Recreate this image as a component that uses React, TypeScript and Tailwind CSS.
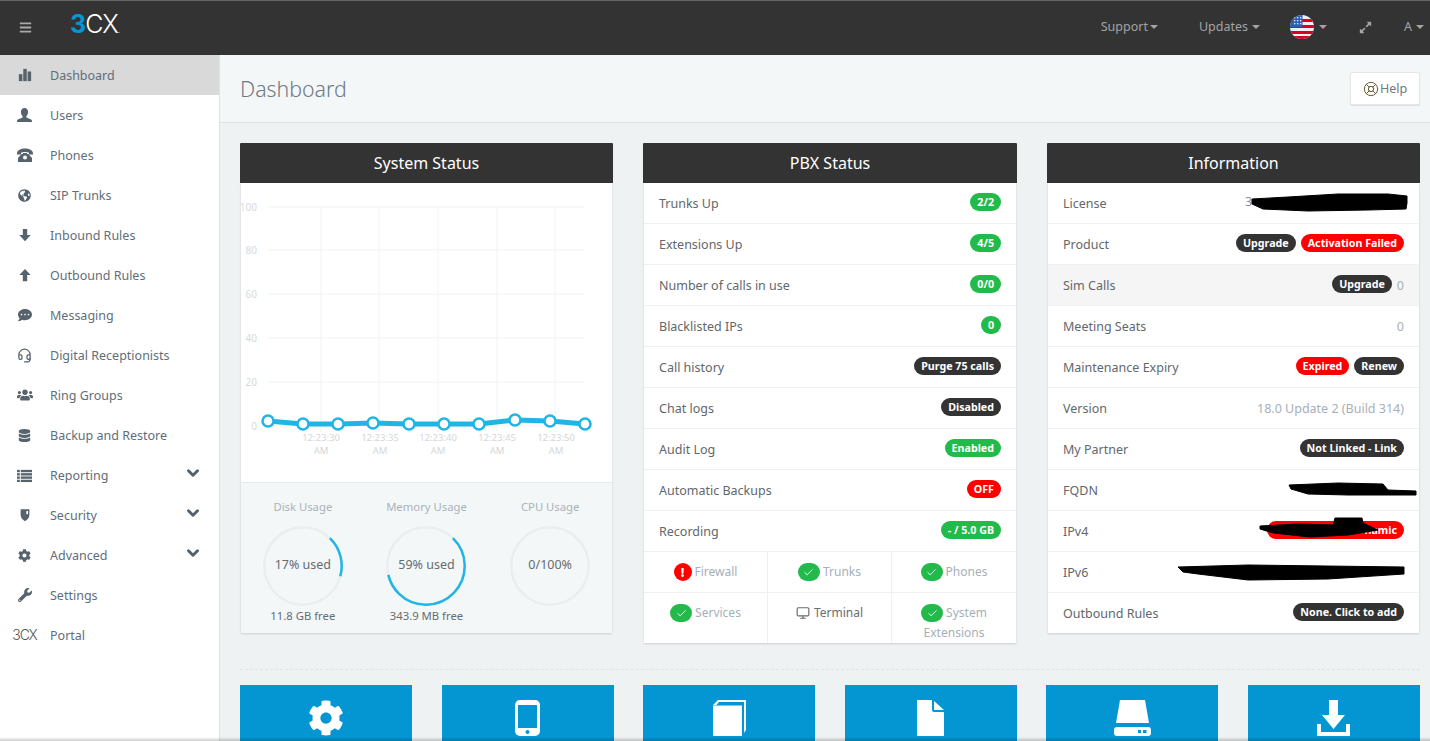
import type { ReactNode } from "react"
import {
  FaBars,
  FaGlobeAmericas,
  FaCommentDots,
  FaUsers,
  FaDatabase,
  FaCog,
  FaWrench,
  FaExpandAlt,
  FaExclamation,
} from "react-icons/fa"
import { FiMonitor } from "react-icons/fi"
import { Check as CheckMark, ChevronDown, Headset, LifeBuoy } from "lucide-react"

const FONT = { fontFamily: '"Noto Sans", sans-serif' }

function Glyph({ children, w = 14 }: { children: ReactNode; w?: number }) {
  return (
    <svg viewBox="0 0 16 16" width={w} height={w} fill="currentColor">
      {children}
    </svg>
  )
}

const BarsIcon = () => (
  <Glyph>
    <rect x="1" y="7" width="4" height="8" />
    <rect x="6" y="1" width="4" height="14" />
    <rect x="11" y="4" width="4" height="11" />
  </Glyph>
)

const UserIcon = () => (
  <Glyph w={15}>
    <path d="M8 0c2.400 0 3.800 1.800 3.800 4.200 0 1.900-.8 3.500-1.800 4.400V10l4.500 2c.9.4 1.500 1.200 1.500 2.200V15H0v-.8c0-1 .6-1.800 1.500-2.200L6 10V8.600C5 7.700 4.200 6.100 4.200 4.200 4.200 1.800 5.600 0 8 0z" />
  </Glyph>
)

const PhoneIcon = () => (
  <Glyph w={16}>
    <path d="M0 6.500C0 3 4 1.500 8 1.500s8 1.500 8 5v1h-4V5.700C11 5.100 9.500 4.900 8 4.900s-3 .2-4 .8v1.800H0z" />
    <path d="M4.500 7h1.500V6h4v1h1.500L15 11v4H1v-4z" />
    <circle cx="8" cy="10.500" r="2" fill="#fff" />
  </Glyph>
)

const ArrowDownIcon = () => (
  <Glyph>
    <path d="M5.500 1h5v7h4L8 15 1.500 8h4z" />
  </Glyph>
)

const ArrowUpIcon = () => (
  <Glyph>
    <path d="M8 1l6.500 7h-4v7h-5V8h-4z" />
  </Glyph>
)

const ListIcon = () => (
  <Glyph w={15}>
    <rect x="0" y="2" width="3" height="2.500" />
    <rect x="4" y="2" width="12" height="2.500" />
    <rect x="0" y="5.500" width="3" height="2.500" />
    <rect x="4" y="5.500" width="12" height="2.500" />
    <rect x="0" y="9" width="3" height="2.500" />
    <rect x="4" y="9" width="12" height="2.500" />
    <rect x="0" y="12.500" width="3" height="2.500" />
    <rect x="4" y="12.500" width="12" height="2.500" />
  </Glyph>
)

const ShieldIcon = () => (
  <Glyph>
    <path d="M3 1.500h10V8c0 3.500-2.500 5.500-5 7-2.500-1.500-5-3.500-5-7z" />
    <path d="M9.500 3.500h2V7H9.500z" fill="#fff" />
  </Glyph>
)

function Logo({ small }: { small?: boolean }) {
  return (
    <span
      className={small ? "text-[14px] font-light tracking-[-1.2px] text-[#555]" : "text-[25px] font-light tracking-[-1px] text-white"}
      style={{ fontFamily: "Inter, sans-serif", lineHeight: 1 }}
    >
      <span className={small ? "" : "font-bold text-[#0396d2]"}>3</span>CX
      {!small && <span className="text-[8px]">.</span>}
    </span>
  )
}

const NAV: { label: string; icon: ReactNode; chevron?: boolean }[] = [
  { label: "Dashboard", icon: <BarsIcon /> },
  { label: "Users", icon: <UserIcon /> },
  { label: "Phones", icon: <PhoneIcon /> },
  { label: "SIP Trunks", icon: <FaGlobeAmericas className="text-[13px]" /> },
  { label: "Inbound Rules", icon: <ArrowDownIcon /> },
  { label: "Outbound Rules", icon: <ArrowUpIcon /> },
  { label: "Messaging", icon: <FaCommentDots /> },
  { label: "Digital Receptionists", icon: <Headset size={15} strokeWidth={2} /> },
  { label: "Ring Groups", icon: <FaUsers className="text-[16px]" /> },
  { label: "Backup and Restore", icon: <FaDatabase className="text-[13px]" /> },
  { label: "Reporting", icon: <ListIcon />, chevron: true },
  { label: "Security", icon: <ShieldIcon />, chevron: true },
  { label: "Advanced", icon: <FaCog className="text-[13px]" />, chevron: true },
  { label: "Settings", icon: <FaWrench /> },
  { label: "Portal", icon: <Logo small /> },
]

function Caret({ className = "" }: { className?: string }) {
  return <span className={`inline-block h-0 w-0 border-x-[4px] border-t-[4px] border-x-transparent border-t-current ${className}`} />
}

function Badge({ children, tone = "dark" }: { children: ReactNode; tone?: "dark" | "red" | "green" }) {
  const bg = tone === "red" ? "bg-[#ff0000]" : tone === "green" ? "bg-[#22bb4b]" : "bg-[#333333]"
  return (
    <span className={`inline-flex h-[18px] items-center rounded-full px-[7px] text-[10.7px] font-bold text-white ${bg}`}>
      {children}
    </span>
  )
}

function Row({ label, children, gray, last }: { label: string; children?: ReactNode; gray?: boolean; last?: boolean }) {
  return (
    <div className={`flex items-center justify-between px-[15px] ${last ? "h-[40px]" : "h-[41px] border-b border-[#eef1f2]"} ${gray ? "bg-[#f5f5f5]" : ""}`}>
      <span className="pt-[2px] text-[12.5px] text-[#62676b]">{label}</span>
      <div className="mb-[2px] flex items-center gap-[5px] text-[12.5px] text-[#a5b0b8]">{children}</div>
    </div>
  )
}

function Plain({ children }: { children: ReactNode }) {
  return <span className="pt-[4px]">{children}</span>
}

function Panel({ title, wide, children }: { title: string; wide?: boolean; children: ReactNode }) {
  return (
    <section className={wide ? "w-[374px]" : "w-[373px]"}>
      <h2 className="flex h-10 items-center justify-center rounded-t-[1px] bg-[#333333] text-[16px] text-white">{title}</h2>
      <div className="mx-px shadow-[0_1px_2px_rgba(0,0,0,0.15)]">{children}</div>
    </section>
  )
}

function Chart() {
  const xs = [268, 303, 338, 373, 409, 444, 479, 515, 550, 585].map((x) => x - 241)
  const ys = [421, 424, 424, 423, 424, 424, 424, 420, 421, 424].map((y) => y - 183)
  const grid = [207, 250, 294, 338, 382, 426].map((y) => y - 183)
  const vert = [321, 379, 438, 497, 555].map((x) => x - 241)
  const labels = [
    { x: 321, t: "12:23:30" },
    { x: 380, t: "12:23:35" },
    { x: 438, t: "12:23:40" },
    { x: 497, t: "12:23:45" },
    { x: 556, t: "12:23:50" },
  ]
  const points = xs.map((x, i) => `${x},${ys[i]}`).join(" ")
  return (
    <svg viewBox="0 0 371 299" className="block h-[299px] w-[371px] bg-white">
      {grid.map((y) => (
        <line key={y} x1="27" x2="344" y1={y} y2={y} stroke="#f1f3f4" />
      ))}
      {vert.map((x) => (
        <line key={x} x1={x} x2={x} y1="24" y2="249" stroke="#f1f3f4" />
      ))}
      {[100, 80, 60, 40, 20, 0].map((v, i) => (
        <text key={v} x="16" y={grid[i] + 4} textAnchor="end" fontSize="10" fill="#d6dadc" style={FONT}>
          {v}
        </text>
      ))}
      {labels.map((l) => (
        <text key={l.t} textAnchor="middle" fontSize="9.5" fill="#d3d7da" style={FONT}>
          <tspan x={l.x - 241} y="258">{l.t}</tspan>
          <tspan x={l.x - 241} y="271">AM</tspan>
        </text>
      ))}
      <polyline points={points} fill="none" stroke="#1fb5e5" strokeWidth="5" />
      {xs.map((x, i) => (
        <circle key={x} cx={x} cy={ys[i]} r="5.5" fill="#fff" stroke="#1fb5e5" strokeWidth="2.5" />
      ))}
    </svg>
  )
}

function Gauge({ title, value, free, pct }: { title: string; value: string; free?: string; pct: number }) {
  const r = 38.7
  const c = 2 * Math.PI * r
  return (
    <div className="flex flex-col items-center">
      <div className="text-[11.3px] leading-[17px] text-[#a9b3ba]">{title}</div>
      <div className="relative mt-[11px] h-[80px] w-[80px]">
        <svg viewBox="0 0 80 80" className="h-[80px] w-[80px]">
          <circle cx="40" cy="40" r={r} fill="none" stroke="#e9eff0" strokeWidth="2.5" />
          {pct > 0 && (
            <circle
              cx="40"
              cy="40"
              r={r}
              fill="none"
              stroke="#1fb5e5"
              strokeWidth="2.5"
              strokeDasharray={`${(pct / 100) * c} ${c}`}
              transform="rotate(-46 40 40)"
            />
          )}
        </svg>
        <div className="absolute inset-0 flex items-center justify-center pb-[2px] text-[12.5px] text-[#666c70]">{value}</div>
      </div>
      <div className="mt-[1px] h-[18px] text-[11.3px] leading-[18px] text-[#666c70]">{free}</div>
    </div>
  )
}

function Check({ red }: { red?: boolean }) {
  return (
    <span
      className={`inline-flex h-[18px] items-center justify-center rounded-full text-white ${red ? "w-[18px] bg-[#ff0000] text-[9px]" : "w-[22px] bg-[#22bb4b]"}`}
    >
      {red ? <FaExclamation /> : <CheckMark size={11} strokeWidth={2} />}
    </span>
  )
}

function StatusCell({ label, red, second }: { label: string; red?: boolean; second?: string }) {
  return (
    <div className="flex h-full w-[124px] flex-col items-center pt-[10px] text-[12px] leading-[20px] text-[#a5b0b8]">
      <div className="flex items-center gap-[3px]">
        <Check red={red} />
        <span>{label}</span>
      </div>
      {second && <div>{second}</div>}
    </div>
  )
}

// marker strokes drawn over the redacted values
function Scribble({ d }: { d: string }) {
  return (
    <svg viewBox="0 0 371 41" className="pointer-events-none absolute inset-0 h-[41px] w-[371px]">
      <path d={d} fill="#000" stroke="#000" strokeLinejoin="round" />
    </svg>
  )
}

const GearTile = () => <FaCog className="text-[36px]" />

const PhoneTile = () => (
  <svg viewBox="0 0 25 36" width="25" height="36" fill="#fff">
    <rect width="25" height="36" rx="5" />
    <rect x="3" y="5" width="19" height="23" fill="#0396d2" />
    <circle cx="12.5" cy="32" r="2" fill="#0396d2" />
  </svg>
)

const BookTile = () => (
  <svg viewBox="0 0 33 36" width="33" height="36" fill="#fff">
    <path d="M5 0H33V30L31 33V2H6L3.500 5H0z" />
    <path d="M0 5.500H29V36H0z" />
  </svg>
)

const FileTile = () => (
  <svg viewBox="0 0 27 36" width="27" height="36" fill="#fff">
    <path d="M0 0H15V10a2 2 0 0 0 2 2H27V36H0z" />
    <path d="M17 1L27 10H17z" />
  </svg>
)

const DriveTile = () => (
  <svg viewBox="0 0 37 36" width="37" height="36" fill="#fff">
    <path d="M6 0H31L35 23H2z" />
    <rect y="27" width="37" height="9" rx="3" />
    <rect x="24" y="30" width="3" height="3" fill="#0396d2" />
    <rect x="29" y="30" width="3.500" height="3" fill="#0396d2" />
  </svg>
)

const DownloadTile = () => (
  <svg viewBox="0 0 33 36" width="33" height="36" fill="#fff">
    <path d="M12 0H21V15H28L16.500 29L5 15H12z" />
    <path d="M0 24H4V32H29V24H33V36H0z" />
  </svg>
)

const TILES = [GearTile, PhoneTile, BookTile, FileTile, DriveTile, DownloadTile]

function Flag() {
  return (
    <svg viewBox="0 0 24 24" className="ml-[30px] h-6 w-6">
      <clipPath id="flag"><circle cx="12" cy="12" r="12" /></clipPath>
      <g clipPath="url(#flag)">
        <rect width="24" height="24" fill="#f0f0f0" />
        <rect y="4" width="24" height="3" fill="#d80027" />
        <rect y="10" width="24" height="3" fill="#d80027" />
        <rect y="16" width="24" height="3" fill="#d80027" />
        <rect y="21" width="24" height="3" fill="#d80027" />
        <rect width="12.5" height="12" fill="#2d5fb5" />
        {[4, 7, 10].flatMap((x) =>
          [2, 5, 8].map((y) => <rect key={`${x}-${y}`} x={x} y={y} width="1.300" height="1.300" fill="#f0f0f0" />),
        )}
      </g>
    </svg>
  )
}

export default function App() {
  return (
    <div className="relative flex h-[741px] w-[1430px] flex-col overflow-hidden bg-[#eef2f3]" style={FONT}>
      <header className="flex h-[55px] shrink-0 items-center border-t border-[#666] bg-[#333333] pb-[2px] text-[#a3a3a3]">
        <FaBars className="ml-[19px] text-[13px] text-[#aaa]" />
        <div className="ml-[38px] mt-[-3px]">
          <Logo />
        </div>
        <div className="ml-auto flex items-center text-[12.5px]">
          <span className="flex items-center gap-[2px]">Support<Caret /></span>
          <span className="ml-[41px] flex items-center gap-1">Updates<Caret /></span>
          <Flag />
          <Caret className="ml-[5px]" />
          <FaExpandAlt className="ml-[32px] text-[13px]" />
          <span className="ml-[32px] mr-[6px] flex items-center gap-[4px]">A<Caret /></span>
        </div>
      </header>

      <div className="flex min-h-0 flex-1">
        <aside className="w-[220px] shrink-0 border-r border-[#dfe3e5] bg-white">
          {NAV.map((item, i) => (
            <div key={item.label} className={`flex h-10 items-center pr-[17px] text-[12.5px] text-[#5f6e7a] ${i === 0 ? "bg-[#d9d9d9]" : ""}`}>
              <span className="flex w-[50px] shrink-0 justify-center pr-[1px] text-[14px] text-[#56636d]">{item.icon}</span>
              <span className="pt-[2px]">{item.label}</span>
              {item.chevron && <ChevronDown size={18} strokeWidth={4} className="mb-[5px] ml-auto text-[#56636d]" />}
            </div>
          ))}
        </aside>

        <main className="min-w-0 flex-1">
          <div className="flex h-[68px] items-center justify-between border-b border-[#dfe3e5] bg-[#f4f7f8] pl-5 pr-[10px]">
            <h1 className="text-[21.3px] font-light text-[#6f7a82]">Dashboard</h1>
            <button className="flex h-[33px] w-[70px] items-center justify-center gap-[1px] rounded-[2px] border border-[#e6e6e6] bg-white text-[12.5px] text-[#6f7a82] shadow-[0_1px_1px_rgba(0,0,0,0.1)]">
              <LifeBuoy size={16} strokeWidth={1.5} className="text-[#6b5a33]" />
              <span className="pt-[2px]">Help</span>
            </button>
          </div>

          <div className="flex items-start justify-between pl-5 pr-[10px] pt-5">
            <Panel title="System Status">
              <Chart />
              <div className="grid h-[151px] grid-cols-3 border-t border-[#e6eaec] bg-[#f4f7f8] pt-[15px]">
                <Gauge title="Disk Usage" value="17% used" free="11.8 GB free" pct={17} />
                <Gauge title="Memory Usage" value="59% used" free="343.9 MB free" pct={59} />
                <Gauge title="CPU Usage" value="0/100%" pct={0} />
              </div>
            </Panel>

            <Panel title="PBX Status" wide>
              <div className="bg-white">
                <Row label="Trunks Up"><Badge tone="green">2/2</Badge></Row>
                <Row label="Extensions Up"><Badge tone="green">4/5</Badge></Row>
                <Row label="Number of calls in use"><Badge tone="green">0/0</Badge></Row>
                <Row label="Blacklisted IPs"><Badge tone="green">0</Badge></Row>
                <Row label="Call history"><Badge>Purge 75 calls</Badge></Row>
                <Row label="Chat logs"><Badge>Disabled</Badge></Row>
                <Row label="Audit Log"><Badge tone="green">Enabled</Badge></Row>
                <Row label="Automatic Backups"><Badge tone="red">OFF</Badge></Row>
                <Row label="Recording"><Badge tone="green">- / 5.0 GB</Badge></Row>
                <div className="flex h-[41px] divide-x divide-[#eef1f2] border-b border-[#eef1f2]">
                  <StatusCell label="Firewall" red />
                  <StatusCell label="Trunks" />
                  <StatusCell label="Phones" />
                </div>
                <div className="flex h-[50px] divide-x divide-[#eef1f2]">
                  <StatusCell label="Services" />
                  <div className="flex w-[124px] items-start justify-center gap-1 pt-[10px] text-[12px] leading-[20px] text-[#666c70]">
                    <FiMonitor className="mt-[3px] text-[14px]" />
                    Terminal
                  </div>
                  <StatusCell label="System" second="Extensions" />
                </div>
              </div>
            </Panel>

            <Panel title="Information">
              <div className="bg-white">
                <div className="relative">
                  <Row label="License" />
                  <span className="absolute left-[197px] top-[10px] text-[12.5px] text-[#8a8f93]">3</span>
                  <Scribble d="M204 16L240 14L290 11L340 11L359 13L359 20L358 26L320 27L260 28L215 26L204 21z" />
                </div>
                <Row label="Product">
                  <Badge>Upgrade</Badge>
                  <Badge tone="red">Activation Failed</Badge>
                </Row>
                <Row label="Sim Calls" gray><Badge>Upgrade</Badge> <Plain>0</Plain></Row>
                <Row label="Meeting Seats"><Plain>0</Plain></Row>
                <Row label="Maintenance Expiry">
                  <Badge tone="red">Expired</Badge>
                  <Badge>Renew</Badge>
                </Row>
                <Row label="Version"><Plain>18.0 Update 2 (Build 314)</Plain></Row>
                <Row label="My Partner"><Badge>Not Linked - Link</Badge></Row>
                <div className="relative">
                  <Row label="FQDN" />
                  <Scribble d="M241 15L290 13L335 14L340 20L368 21L368 25L300 25L260 24L243 19z" />
                </div>
                <div className="relative">
                  <Row label="IPv4">
                    <Badge tone="red"><span className="w-[123px] text-right">namic</span></Badge>
                  </Row>
                  <Scribble d="M212 15L250 13L285 14L287 7L314 7L315 12L330 19L300 24L262 26L225 22L212 18z" />
                </div>
                <div className="relative">
                  <Row label="IPv6" />
                  <Scribble d="M130 15L200 13L356 15L356 22L280 27L200 28L150 22L135 20z" />
                </div>
                <Row label="Outbound Rules" last><Badge>None. Click to add</Badge></Row>
              </div>
            </Panel>
          </div>

          <div className="ml-5 mr-[10px] mt-[26px] border-t border-dashed border-[#dfe4e6]" />
          <div className="mt-[15px] flex justify-between pl-5 pr-[10px]">
            {TILES.map((Tile, i) => (
              <div key={i} className="flex h-[100px] w-[172px] justify-center bg-[#0396d2] pt-[15px] text-white">
                <Tile />
              </div>
            ))}
          </div>
        </main>
      </div>
      <div className="pointer-events-none absolute bottom-0 left-0 right-0 h-[4px] bg-gradient-to-b from-transparent to-black/20" />
    </div>
  )
}
